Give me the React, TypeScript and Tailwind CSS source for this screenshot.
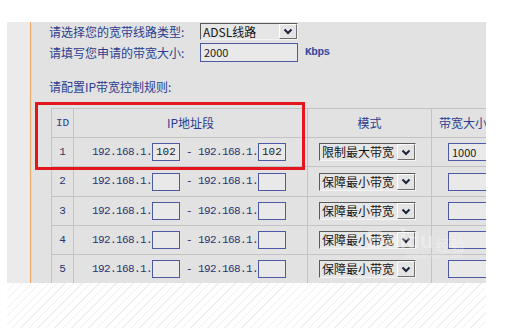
import React from 'react';

const cjk = "font-['Noto_Sans_CJK_SC','Noto_Sans',sans-serif]";
const mono = "font-['Liberation_Mono','Noto_Sans_CJK_SC',monospace]";

function Arrow() {
  return (
    <div className="flex h-full w-[18px] flex-none items-center justify-center border border-t-white border-l-white border-b-[#6f6f6f] border-r-[#6f6f6f] bg-[#e4e4e4]">
      <svg width="10" height="7" viewBox="0 0 10 7">
        <polyline points="1.5,1.5 5,5 8.5,1.5" fill="none" stroke="#1b2240" strokeWidth="2" />
      </svg>
    </div>
  );
}

function Select({ label, className }: { label: string; className: string }) {
  return (
    <div
      className={`flex items-center border border-t-[#5a5a5a] border-l-[#5a5a5a] border-b-[#f4f4f4] border-r-[#f4f4f4] bg-[#e6e6e6] ${className}`}
    >
      <span className="flex-1 whitespace-nowrap pl-[2px] text-[12px] leading-[14px] text-[#151515]">{label}</span>
      <Arrow />
    </div>
  );
}

function Box({ value, className = '' }: { value?: string; className?: string }) {
  return (
    <div
      className={`flex h-[18px] items-center border border-[#4d5aa3] bg-[#e9e9e9] pl-[3px] text-[11px] leading-none text-[#1c1c1c] ${className}`}
    >
      {value}
    </div>
  );
}

const rows = [
  { id: '1', a: '102', b: '102', mode: '限制最大带宽', bw: '1000', h: 'h-[29px]' },
  { id: '2', a: '', b: '', mode: '保障最小带宽', bw: '', h: 'h-[30px]' },
  { id: '3', a: '', b: '', mode: '保障最小带宽', bw: '', h: 'h-[29px]' },
  { id: '4', a: '', b: '', mode: '保障最小带宽', bw: '', h: 'h-[29px]' },
  { id: '5', a: '', b: '', mode: '保障最小带宽', bw: '', h: 'h-[29px]' },
];

const cell = 'flex items-center border-r border-b border-[#c3c3c3]';

export default function App() {
  return (
    <div className={`relative h-[328px] w-[521px] overflow-hidden bg-white ${cjk}`}>
      <div className="pl-[7px] pt-[22px]">
        <div className="flex h-[261px] w-[479px]">
          <div className="w-[24px] flex-none border-r border-[#f0a466] bg-[#ebebeb]" />
          <div className="flex-1 overflow-hidden bg-[#e2e2e2]">
            {/* line type */}
            <div className="mt-[1px] flex h-[17px] items-center pl-[18px]">
              <span className="w-[151px] text-[12px] leading-[14px] text-[#2c3d8e]">请选择您的宽带线路类型:</span>
              <Select label="ADSL线路" className="h-[17px] w-[98px]" />
            </div>
            {/* bandwidth */}
            <div className="mt-[3px] flex h-[19px] items-center pl-[18px]">
              <span className="w-[151px] text-[12px] leading-[14px] text-[#2c3d8e]">请填写您申请的带宽大小:</span>
              <Box value="2000" className="h-[19px] w-[98px]" />
              <span className={`ml-[7px] text-[11px] font-bold tracking-[-0.4px] text-[#3b4ba1] ${mono}`}>Kbps</span>
            </div>
            <div className="mt-[18px] h-[14px] pl-[18px] text-[12px] leading-[14px] text-[#2c3d8e]">请配置IP带宽控制规则:</div>

            {/* rules table */}
            <div className="ml-[20px] mt-[14px] w-[480px] border-l border-t border-[#c3c3c3]">
              <div className="grid h-[29px] grid-cols-[22px_234px_124px_100px] text-[12px] text-[#2c3d8e]">
                <div className={`${cell} justify-center ${mono} text-[11px]`}>ID</div>
                <div className={`${cell} justify-center`}>IP地址段</div>
                <div className={`${cell} justify-center`}>模式</div>
                <div className={`${cell} pl-[7px]`}>带宽大小</div>
              </div>
              {rows.map((r) => (
                <div key={r.id} className={`grid grid-cols-[22px_234px_124px_100px] ${r.h}`}>
                  <div className={`${cell} justify-center ${mono} text-[11px] text-[#2a3470]`}>{r.id}</div>
                  <div className={`${cell} pl-[18px] ${mono} text-[11px] tracking-[-0.6px] text-[#2a3470]`}>
                    <span className="w-[60px]">192.168.1.</span>
                    <Box value={r.a} className="w-[28px] tracking-normal" />
                    <span className="w-[18px] whitespace-pre">{' - '}</span>
                    <span className="w-[60px]">192.168.1.</span>
                    <Box value={r.b} className="w-[28px] tracking-normal" />
                  </div>
                  <div className={`${cell} pl-[11px]`}>
                    <Select label={r.mode} className="h-[18px] w-[97px]" />
                  </div>
                  <div className={`${cell} pl-[16px]`}>
                    <Box value={r.bw} className="w-[80px]" />
                  </div>
                </div>
              ))}
            </div>
          </div>
        </div>
        <div className="h-[45px] w-[479px] bg-[repeating-linear-gradient(135deg,#ffffff_0px,#ffffff_5px,#efefef_5px,#efefef_6px)]" />
      </div>

      {/* annotation */}
      <div className="absolute left-[35px] top-[102px] h-[68px] w-[270px] border-[3px] border-[#e3161d]" />

      {/* watermark */}
      <div className="pointer-events-none absolute left-[366px] top-[226px] flex flex-col items-start text-white/35">
        <div className="flex items-end leading-none">
          <span className="font-['Liberation_Sans',sans-serif] text-[26px] font-bold">Bai</span>
          <span className="font-['Liberation_Sans',sans-serif] text-[22px] font-bold">du</span>
          <span className="ml-[2px] text-[15px]">经验</span>
        </div>
        <span className="ml-[40px] font-['Liberation_Sans',sans-serif] text-[7px] leading-none">jingyan.baidu.com</span>
      </div>
    </div>
  );
}
